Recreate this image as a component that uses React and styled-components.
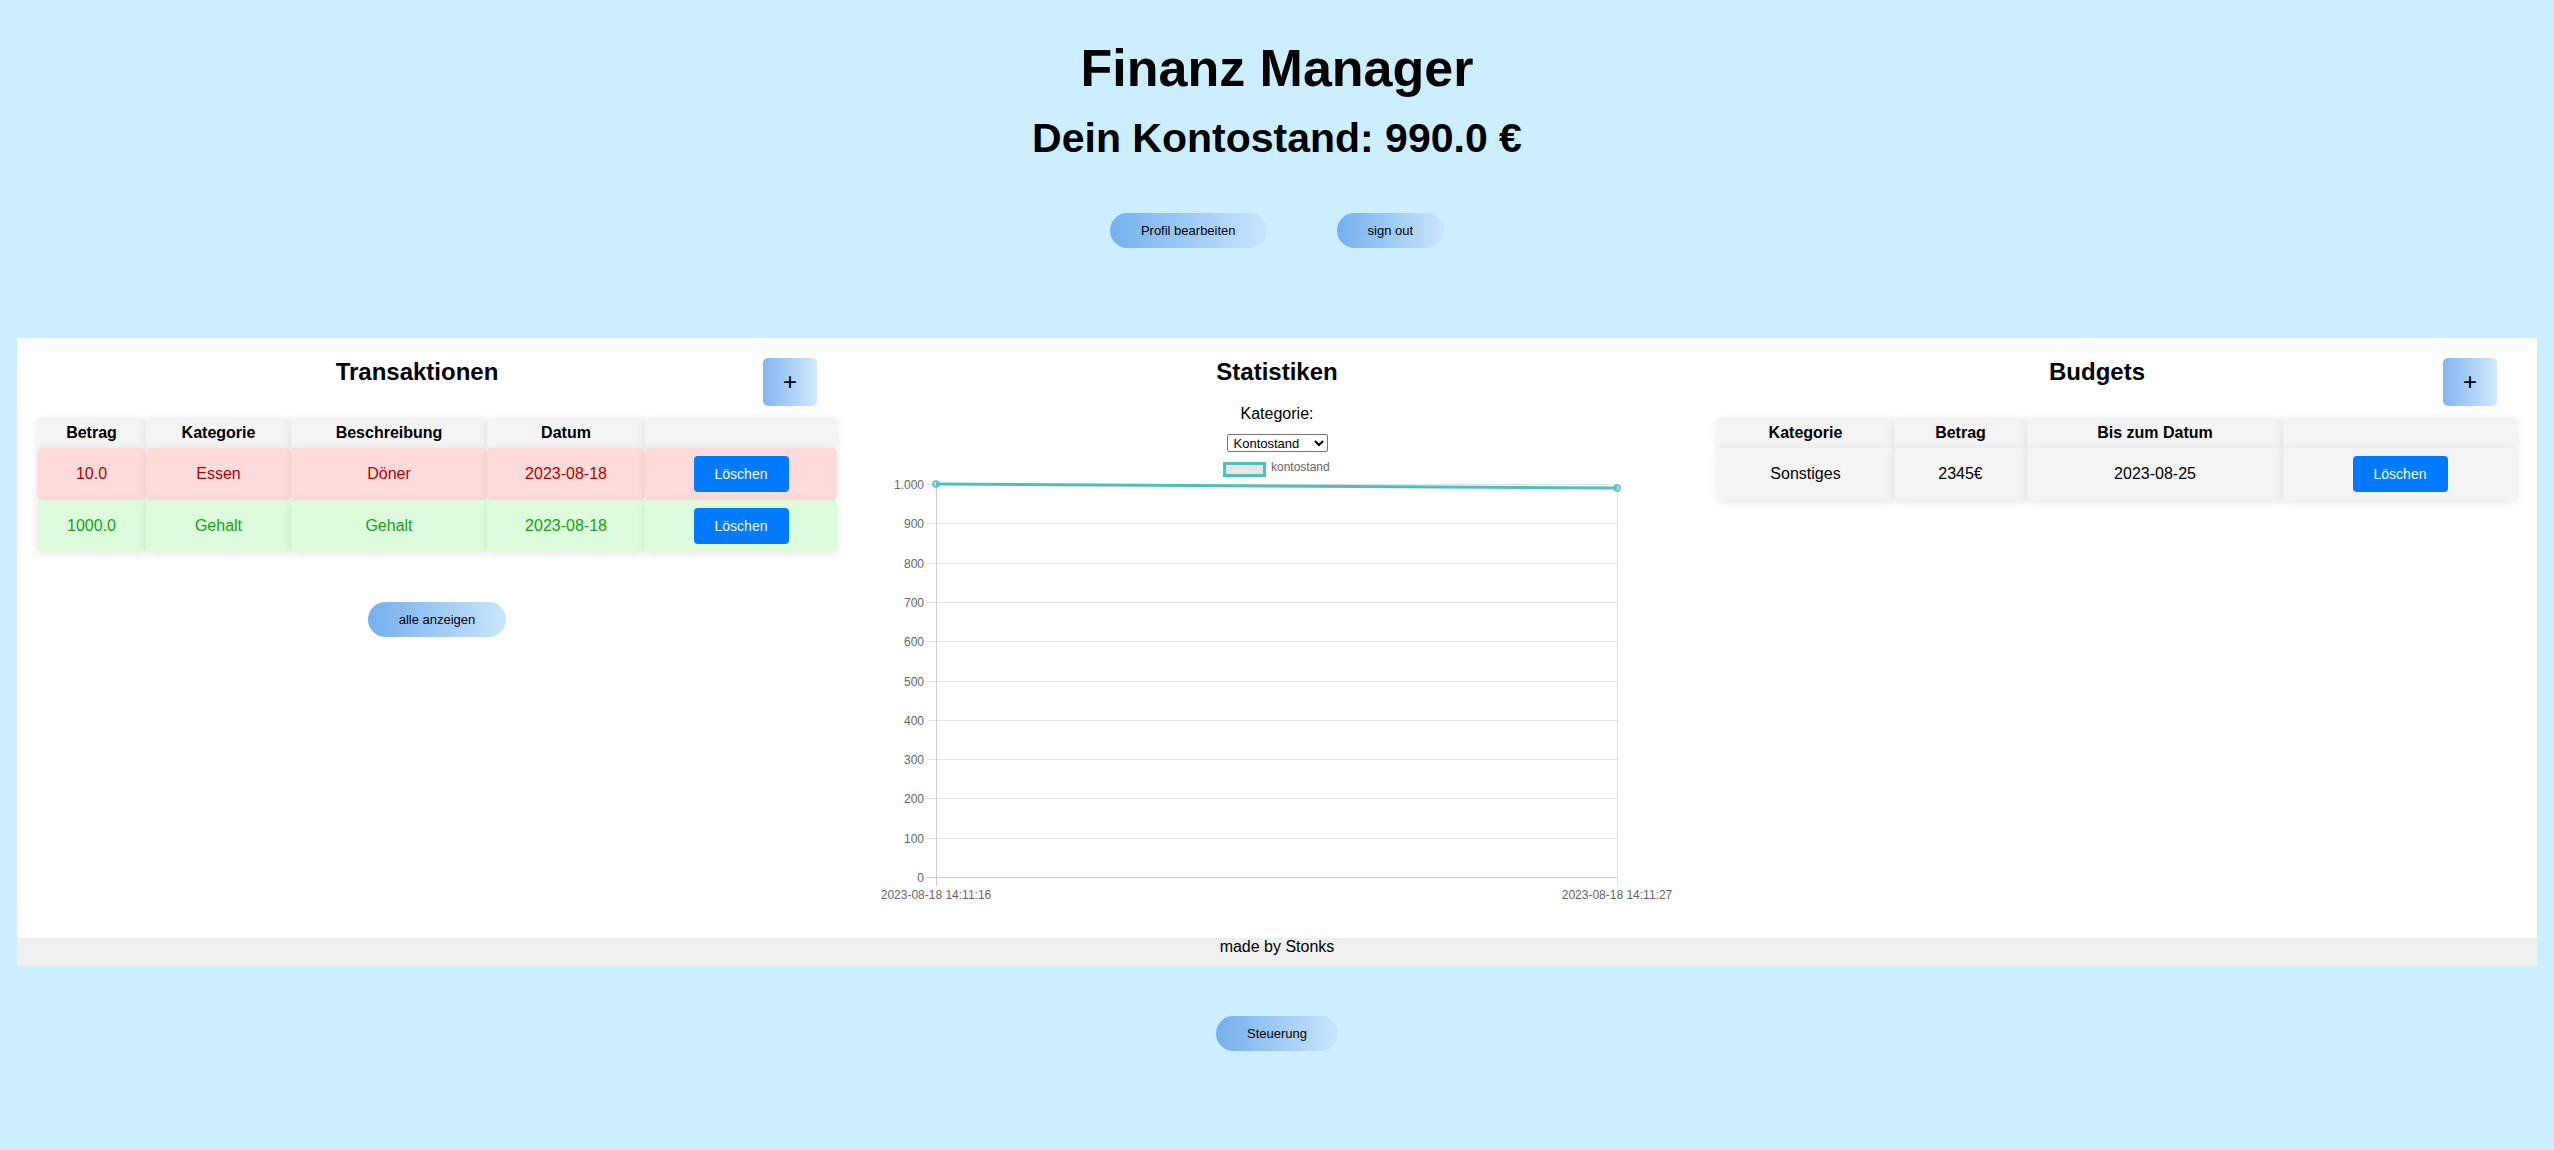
import React from 'react';
import styled, { createGlobalStyle } from 'styled-components';

const GlobalStyle = createGlobalStyle`
  html, body { margin: 0; padding: 0; background: #cceeff; }
  body { font-family: "Liberation Sans", Arial, sans-serif; color: #000; }
  * { box-sizing: border-box; }
`;

const Page = styled.div`
  padding: 38px 17px 60px;
  min-height: 1150px;
`;

const Header = styled.header`
  text-align: center;
`;

const Title = styled.h1`
  margin: 0;
  font-size: 52px;
  font-weight: bold;
  line-height: normal;
`;

const Balance = styled.h2`
  margin: 17px 0 0;
  font-size: 41px;
  font-weight: bold;
  line-height: normal;
`;

const ButtonRow = styled.div`
  display: flex;
  justify-content: center;
  gap: 70px;
  margin-top: 51px;
`;

const PillButton = styled.button`
  background: linear-gradient(to right, #74b0ee, #c9e5fd);
  border: none;
  border-radius: 18px;
  padding: 10px 31px;
  font-family: "Liberation Sans", Arial, sans-serif;
  font-size: 13px;
  line-height: 15px;
  color: #000;
  cursor: pointer;
`;

const Card = styled.main`
  margin-top: 90px;
  background: #fff;
`;

const Columns = styled.div`
  display: grid;
  grid-template-columns: repeat(3, 1fr);
`;

const Column = styled.section`
  padding: 20px;
  display: flex;
  flex-direction: column;
`;

const SectionHeader = styled.div`
  display: flex;
  align-items: flex-start;
  margin-bottom: 12px;
`;

const SectionTitle = styled.h2`
  flex: 1;
  margin: 0;
  font-size: 24px;
  font-weight: bold;
  line-height: normal;
  text-align: center;
  padding-left: ${p => p.$offset || 0}px;
`;

const AddButton = styled.button`
  margin-right: 20px;
  background: linear-gradient(to right, #82b6ef, #d3e8fd);
  border: none;
  border-radius: 5px;
  padding: 10px 20px;
  font-family: "Liberation Sans", Arial, sans-serif;
  font-size: 24px;
  line-height: 28px;
  color: #000;
  cursor: pointer;
`;

const Table = styled.table`
  width: 100%;
  border-collapse: separate;
  border-spacing: 0;
  table-layout: fixed;
  font-size: 16px;
`;

const Th = styled.th`
  background: #f4f4f4;
  padding: 6px 0;
  line-height: 18px;
  font-weight: bold;
  text-align: center;
  border-radius: 5px;
  box-shadow: 0 2px 10px rgba(0, 0, 0, 0.1);
`;

const rowBg = { expense: '#fddbdb', income: '#dcfcdc', neutral: '#f4f4f4' };
const rowFg = { expense: '#b40000', income: '#13a313', neutral: '#000' };

const Td = styled.td`
  background: ${p => rowBg[p.$variant]};
  color: ${p => rowFg[p.$variant]};
  padding: 8px 0;
  line-height: 18px;
  text-align: center;
  vertical-align: middle;
  border-radius: 5px;
  box-shadow: 0 2px 10px rgba(0, 0, 0, 0.1);
`;

const DeleteButton = styled.button`
  background: #007bff;
  color: #fff;
  border: none;
  border-radius: 4px;
  padding: 10px 20px;
  font-family: "Liberation Sans", Arial, sans-serif;
  font-size: 14px;
  line-height: 16px;
  width: 95px;
  cursor: pointer;
`;

const CenterRow = styled.div`
  display: flex;
  justify-content: center;
  margin-top: ${p => p.$top || 0}px;
`;

const FilterLabel = styled.label`
  display: block;
  margin-top: 19px;
  text-align: center;
  font-size: 16px;
  line-height: 18px;
`;

const Select = styled.select`
  width: 101px;
  height: 18px;
  font-family: "Liberation Sans", Arial, sans-serif;
  font-size: 13px;
  padding: 0 0 0 2px;
  border: 1px solid #767676;
  border-radius: 2px;
  background: #fff;
  color: #000;
`;

const ChartSvg = styled.svg`
  display: block;
  font-family: "Liberation Sans", Arial, sans-serif;
`;

const Footer = styled.footer`
  background: #f0f0f0;
  text-align: center;
  font-size: 16px;
  line-height: 18px;
  padding-bottom: 10px;
`;

function Chart() {
  const left = 59, right = 740, top = 32, bottom = 425;
  const step = (bottom - top) / 10;
  const teal = 'rgb(75,192,192)';
  const labels = ['1.000', '900', '800', '700', '600', '500', '400', '300', '200', '100', '0'];
  const yFor = v => bottom - (v / 1000) * (bottom - top);
  return (
    <ChartSvg width="800" height="466" viewBox="0 0 800 466">
      <rect x="347.5" y="11.5" width="40" height="12" fill="#e6e6e6" stroke={teal} strokeWidth="3" />
      <text x="394" y="19" fontSize="12" fill="#666">kontostand</text>
      {labels.map((l, i) => {
        const y = Math.round(top + i * step) + 0.5;
        return (
          <g key={l}>
            <line x1="50" x2={right} y1={y} y2={y} stroke={i === 10 ? '#ccc' : '#e3e3e3'} strokeWidth="1" />
            <text x="47" y={y + 4} fontSize="12" fill="#666" textAnchor="end">{l}</text>
          </g>
        );
      })}
      <line x1={left + 0.5} x2={left + 0.5} y1={top} y2={bottom + 9} stroke="#ccc" strokeWidth="1" />
      <line x1={right + 0.5} x2={right + 0.5} y1={top} y2={bottom + 9} stroke="#e3e3e3" strokeWidth="1" />
      <text x={left} y="447" fontSize="12" fill="#666" textAnchor="middle">2023-08-18 14:11:16</text>
      <text x={right} y="447" fontSize="12" fill="#666" textAnchor="middle">2023-08-18 14:11:27</text>
      <line x1={left} y1={yFor(1000)} x2={right} y2={yFor(990)} stroke={teal} strokeWidth="3" />
      <circle cx={left} cy={yFor(1000)} r="3" fill="rgba(75,192,192,0.3)" stroke={teal} strokeWidth="1.5" />
      <circle cx={right} cy={yFor(990)} r="3" fill="rgba(75,192,192,0.3)" stroke={teal} strokeWidth="1.5" />
    </ChartSvg>
  );
}

const transactions = [
  { betrag: '10.0', kategorie: 'Essen', beschreibung: 'Döner', datum: '2023-08-18', variant: 'expense' },
  { betrag: '1000.0', kategorie: 'Gehalt', beschreibung: 'Gehalt', datum: '2023-08-18', variant: 'income' },
];

const budgets = [
  { kategorie: 'Sonstiges', betrag: '2345€', datum: '2023-08-25' },
];

export default function App() {
  return (
    <>
      <GlobalStyle />
      <Page>
        <Header>
          <Title>Finanz Manager</Title>
          <Balance>Dein Kontostand: 990.0 €</Balance>
          <ButtonRow>
            <PillButton>Profil bearbeiten</PillButton>
            <PillButton>sign out</PillButton>
          </ButtonRow>
        </Header>

        <Card>
          <Columns>
            <Column>
              <SectionHeader>
                <SectionTitle $offset={34}>Transaktionen</SectionTitle>
                <AddButton>+</AddButton>
              </SectionHeader>
              <Table>
                <colgroup>
                  <col style={{ width: 109 }} />
                  <col style={{ width: 145 }} />
                  <col style={{ width: 196 }} />
                  <col style={{ width: 158 }} />
                  <col style={{ width: 192 }} />
                </colgroup>
                <thead>
                  <tr>
                    <Th>Betrag</Th>
                    <Th>Kategorie</Th>
                    <Th>Beschreibung</Th>
                    <Th>Datum</Th>
                    <Th></Th>
                  </tr>
                </thead>
                <tbody>
                  {transactions.map((t, i) => (
                    <tr key={i}>
                      <Td $variant={t.variant}>{t.betrag}</Td>
                      <Td $variant={t.variant}>{t.kategorie}</Td>
                      <Td $variant={t.variant}>{t.beschreibung}</Td>
                      <Td $variant={t.variant}>{t.datum}</Td>
                      <Td $variant={t.variant}><DeleteButton>Löschen</DeleteButton></Td>
                    </tr>
                  ))}
                </tbody>
              </Table>
              <CenterRow $top={50}>
                <PillButton>alle anzeigen</PillButton>
              </CenterRow>
            </Column>

            <Column>
              <SectionTitle>Statistiken</SectionTitle>
              <FilterLabel htmlFor="kat">Kategorie:</FilterLabel>
              <CenterRow $top={11}>
                <Select id="kat" defaultValue="Kontostand">
                  <option>Kontostand</option>
                  <option>Essen</option>
                  <option>Gehalt</option>
                </Select>
              </CenterRow>
              <Chart />
            </Column>

            <Column>
              <SectionHeader>
                <SectionTitle $offset={34}>Budgets</SectionTitle>
                <AddButton>+</AddButton>
              </SectionHeader>
              <Table>
                <colgroup>
                  <col style={{ width: 177 }} />
                  <col style={{ width: 133 }} />
                  <col style={{ width: 256 }} />
                  <col style={{ width: 234 }} />
                </colgroup>
                <thead>
                  <tr>
                    <Th>Kategorie</Th>
                    <Th>Betrag</Th>
                    <Th>Bis zum Datum</Th>
                    <Th></Th>
                  </tr>
                </thead>
                <tbody>
                  {budgets.map((b, i) => (
                    <tr key={i}>
                      <Td $variant="neutral">{b.kategorie}</Td>
                      <Td $variant="neutral">{b.betrag}</Td>
                      <Td $variant="neutral">{b.datum}</Td>
                      <Td $variant="neutral"><DeleteButton>Löschen</DeleteButton></Td>
                    </tr>
                  ))}
                </tbody>
              </Table>
            </Column>
          </Columns>
          <Footer>made by Stonks</Footer>
        </Card>

        <CenterRow $top={50}>
          <PillButton>Steuerung</PillButton>
        </CenterRow>
      </Page>
    </>
  );
}
